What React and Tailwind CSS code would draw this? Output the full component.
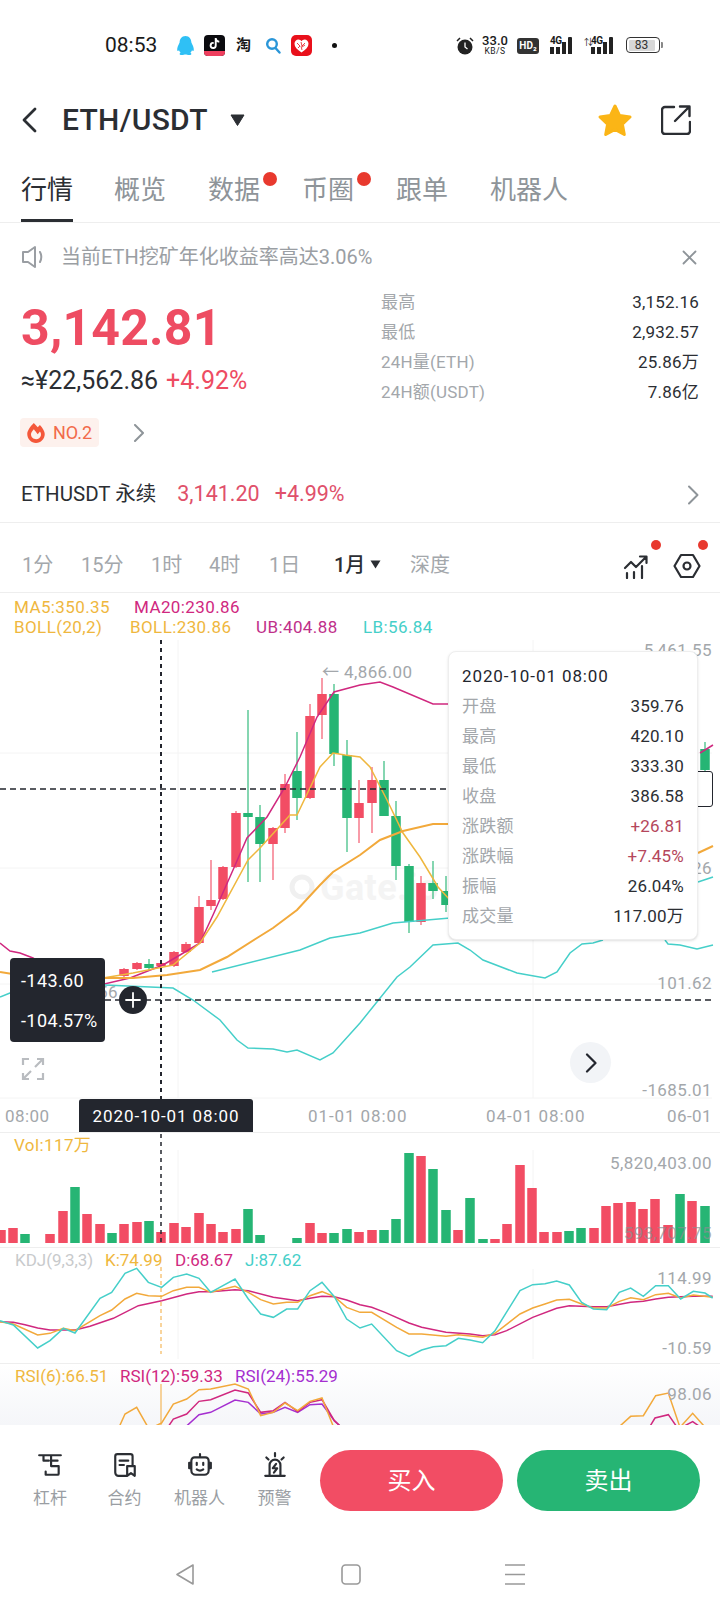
import { FaTiktok, FaFireAlt } from 'react-icons/fa';

const RED = '#f24d64';
const GREEN = '#26b574';
const YELLOW = '#efb73e';
const ORANGE = '#f2a93b';
const MAGENTA = '#d0287f';
const CYAN = '#45cfc9';
const PURPLE = '#a52fd0';

// points are read off 3x crops: x/3 + ox, y/3 + oy
const pts = (list, ox, oy) => list.map(([x, y]) => `${ox + x / 3},${oy + y / 3}`).join(' ');
const line = (list) => list.map(([x, y]) => `${x},${y}`).join(' ');

const candles = [
  [124, 968, 977, 969, 976, 'r'], [137, 962, 970, 963, 969, 'r'], [149, 959, 971, 964, 968, 'g'],
  [161, 962, 968, 963, 966, 'r'], [174, 951, 967, 952, 966, 'r'], [186, 942, 953, 944, 952, 'r'],
  [199, 896, 944, 907, 943, 'r'], [211, 860, 910, 900, 906, 'r'], [223, 866, 900, 867, 899, 'r'],
  [236, 811, 868, 813, 867, 'r'], [248, 710, 882, 813, 817, 'g'], [260, 805, 882, 817, 844, 'g'],
  [273, 827, 880, 828, 844, 'r'], [285, 774, 833, 784, 828, 'r'], [297, 732, 820, 771, 798, 'g'],
  [310, 704, 799, 716, 798, 'r'], [322, 678, 739, 694, 715, 'r'], [334, 684, 766, 694, 754, 'g'],
  [347, 740, 852, 755, 818, 'g'], [359, 780, 843, 803, 818, 'r'], [372, 767, 833, 780, 803, 'r'],
  [384, 761, 816, 780, 816, 'g'], [396, 801, 880, 816, 866, 'g'], [409, 864, 933, 866, 922, 'g'],
  [421, 876, 925, 883, 922, 'r'], [433, 861, 899, 883, 891, 'g'], [446, 876, 912, 891, 905, 'g'],
  [705, 742, 771, 749, 770, 'g'],
];

const volumes = [
  [1, 1230, 'r'], [13, 1228, 'r'], [25, 1234, 'g'], [50, 1234, 'r'], [63, 1211, 'r'], [75, 1187, 'g'],
  [87, 1214, 'r'], [100, 1224, 'r'], [112, 1233, 'g'], [124, 1224, 'r'], [137, 1222, 'r'], [149, 1221, 'g'],
  [161, 1232, 'r'], [174, 1223, 'r'], [186, 1227, 'r'], [199, 1213, 'r'], [211, 1224, 'r'], [223, 1232, 'r'],
  [236, 1229, 'r'], [248, 1209, 'g'], [260, 1235, 'g'], [297, 1238, 'g'], [310, 1223, 'r'], [322, 1233, 'r'],
  [334, 1233, 'g'], [347, 1229, 'g'], [359, 1232, 'r'], [372, 1230, 'r'], [384, 1230, 'g'], [396, 1219, 'g'],
  [409, 1153, 'g'], [421, 1156, 'r'], [433, 1169, 'g'], [446, 1210, 'g'], [458, 1230, 'r'], [470, 1198, 'g'],
  [483, 1239, 'g'], [495, 1239, 'r'], [507, 1224, 'r'], [520, 1165, 'r'], [532, 1188, 'r'], [544, 1232, 'r'],
  [557, 1232, 'r'], [569, 1231, 'g'], [581, 1228, 'g'], [594, 1228, 'r'], [606, 1206, 'r'], [618, 1203, 'r'],
  [631, 1202, 'r'], [643, 1209, 'r'], [655, 1199, 'r'], [668, 1225, 'r'], [680, 1194, 'g'], [692, 1201, 'r'],
  [705, 1206, 'g'],
];

const maUpper = [[0, 943], [10, 951], [20, 953], [33, 958], [60, 975], [100, 985], [130, 978], [163, 965], [180, 955], [200, 943], [213, 915], [233, 870], [247, 838], [267, 817], [285, 787], [300, 757], [317, 717], [334, 692], [360, 685], [380, 682], [393, 687], [433, 704], [450, 704], [470, 700]];
const maLower = [[103, 978], [133, 973], [173, 965], [200, 943], [217, 917], [248, 860], [260, 848], [290, 815], [297, 815], [320, 767], [333, 753], [345, 755], [360, 757], [370, 767], [387, 800], [403, 833], [420, 857], [438, 887], [450, 900]];
const bollMid = [[0, 972], [50, 980], [105, 978], [133, 978], [167, 975], [200, 970], [227, 957], [257, 938], [273, 928], [297, 910], [320, 885], [333, 872], [360, 855], [380, 840], [403, 831], [433, 824], [450, 824]];
const bollMidEnd = [[698, 853], [713, 846]];
const lbUpper = [[212, 972], [300, 950], [330, 938], [360, 933], [393, 923], [450, 918]];
const lbUpperEnd = [[698, 882], [713, 877]];
const lbLower = [[0, 997], [10, 993], [40, 985], [105, 985], [150, 987], [173, 988], [193, 1000], [220, 1020], [237, 1040], [248, 1048], [273, 1049], [287, 1052], [297, 1050], [320, 1060], [333, 1053], [360, 1023], [397, 977], [410, 967], [433, 945], [458, 943], [470, 950], [483, 960], [517, 973], [545, 978], [557, 972], [570, 953], [582, 944], [593, 943], [603, 940]];
const lbLowerEnd = [[665, 940], [668, 944], [680, 945], [697, 949], [713, 945]];

const kdjJ = [
  ...[[0, 245], [40, 258], [113, 327], [150, 305], [190, 268], [225, 282], [300, 178], [335, 160], [375, 103], [410, 88], [445, 130], [485, 145], [520, 115], [560, 105], [597, 118], [632, 160], [705, 120], [745, 180], [782, 225], [820, 235], [860, 210], [893, 210], [930, 155], [966, 130], [1003, 173], [1040, 240], [1080, 267]],
  ...[[35, 255], [110, 335], [147, 352], [185, 333], [220, 323], [258, 320], [295, 298], [330, 303], [368, 311], [405, 275], [480, 155], [518, 137], [555, 134], [590, 126], [628, 138], [665, 190], [700, 210], [740, 212], [778, 160], [812, 147], [850, 172], [887, 140], [925, 140], [962, 180], [1000, 157], [1035, 162], [1058, 177]].map(([x, y]) => [x + 1080, y]),
];
const kdjK = [
  ...[[0, 248], [40, 255], [113, 288], [150, 283], [190, 268], [225, 275], [300, 230], [335, 213], [375, 180], [410, 163], [445, 170], [485, 172], [520, 155], [560, 145], [597, 145], [632, 160], [705, 142], [745, 160], [782, 182], [820, 195], [860, 190], [893, 190], [930, 170], [966, 158], [1003, 173], [1040, 205], [1080, 220]],
  ...[[35, 220], [110, 265], [147, 285], [185, 285], [258, 292], [295, 287], [368, 295], [405, 283], [480, 225], [518, 207], [555, 195], [590, 183], [628, 181], [665, 195], [700, 207], [740, 207], [778, 187], [812, 176], [850, 182], [887, 167], [925, 163], [962, 177], [1000, 168], [1058, 175]].map(([x, y]) => [x + 1080, y]),
];
const kdjD = [
  ...[[0, 248], [40, 250], [75, 257], [113, 267], [150, 273], [225, 273], [270, 262], [340, 238], [415, 200], [485, 185], [560, 165], [597, 158], [632, 158], [705, 152], [745, 155], [820, 175], [893, 185], [930, 178], [966, 172], [1003, 173], [1040, 183], [1080, 197]],
  ...[[35, 205], [75, 220], [147, 252], [185, 265], [258, 280], [330, 285], [368, 290], [405, 287], [440, 275], [518, 235], [590, 208], [628, 200], [700, 203], [740, 203], [812, 190], [850, 187], [887, 180], [925, 175], [1000, 172], [1058, 172]].map(([x, y]) => [x + 1080, y]),
];

const rsi6 = [[357, 565], [375, 525], [410, 505], [447, 570], [485, 552], [520, 495], [560, 480], [597, 452], [632, 450], [705, 435], [745, 450], [782, 530], [820, 520], [855, 492], [893, 515], [930, 487], [966, 477], [1003, 570]];
const rsi12 = [[480, 600], [520, 540], [560, 525], [597, 487], [632, 482], [705, 453], [745, 462], [782, 520], [820, 515], [855, 490], [893, 518], [930, 490], [966, 482], [1003, 545], [1030, 570]];
const rsi24 = [[550, 570], [597, 527], [632, 520], [705, 483], [745, 490], [782, 525], [820, 520], [855, 505], [893, 520], [930, 497], [966, 495], [1003, 545], [1030, 570]];
const rsi6End = [[770, 570], [812, 532], [850, 530], [887, 470], [925, 462], [960, 565], [998, 523], [1040, 570]];
const rsi12End = [[865, 570], [885, 537], [925, 527], [955, 570], [998, 548], [1030, 570]];

const tabs = [
  { label: '概览', cls: 'w-[94px]' },
  { label: '数据', cls: 'w-[94px]', dot: true },
  { label: '币圈', cls: 'w-[94px]', dot: true },
  { label: '跟单', cls: 'w-[94px]' },
  { label: '机器人', cls: 'w-[80px]' },
];

const stats = [
  ['最高', '3,152.16'],
  ['最低', '2,932.57'],
  ['24H量(ETH)', '25.86万'],
  ['24H额(USDT)', '7.86亿'],
];

const details = [
  ['开盘', '359.76'],
  ['最高', '420.10'],
  ['最低', '333.30'],
  ['收盘', '386.58'],
  ['涨跌额', '+26.81', true],
  ['涨跌幅', '+7.45%', true],
  ['振幅', '26.04%'],
  ['成交量', '117.00万'],
];

const Signal = () => (
  <div className="relative flex items-end gap-[2px] h-[17px] w-[28px]">
    <span className="absolute left-0 top-[-2px] text-[10px] leading-[11px] font-bold tracking-[-0.5px]">4G</span>
    <span className="w-[4px] h-[7px] bg-[#222]" />
    <span className="w-[4px] h-[7px] bg-[#222]" />
    <span className="w-[4px] h-[12px] bg-[#222]" />
    <span className="w-[4px] h-[17px] bg-[#222] rounded-t-[1px]" />
  </div>
);

const StatusBar = () => (
  <div className="relative h-[90px] text-[#1a1a1a] shrink-0">
    <span className="absolute left-[105px] top-[32px] text-[21px] leading-[26px]">08:53</span>
    <svg className="absolute left-[176px] top-[36px]" width="19" height="20" viewBox="0 0 19 20">
      <path d="M9.500 0C5.500 0 3.800 3 3.600 6.500 2.400 9 1 11.500 1.200 14c.1 1.300 1 1.200 1.800.2.300 1 .8 1.800 1.600 2.500C3.300 17.300 3 18.800 5.500 19c1.600.1 3-.6 4-.6s2.400.7 4 .6c2.500-.2 2.200-1.700.9-2.300.8-.7 1.300-1.500 1.600-2.500.8 1 1.700 1.100 1.800-.2.2-2.500-1.200-5-2.400-7.500C15.200 3 13.500 0 9.500 0z" fill="#2fc0f5" />
    </svg>
    <div className="absolute left-[204px] top-[35px] w-[21px] h-[21px] rounded-[4px] bg-[#0b0b0f] flex items-start justify-center pt-[3px] overflow-hidden">
      <FaTiktok className="text-white text-[11px]" />
      <span className="absolute left-0 right-0 bottom-0 h-[5px] bg-[#ee3f5e]" />
    </div>
    <span className="absolute left-[236px] top-[35px] text-[15px] leading-[20px] font-bold">淘</span>
    <svg className="absolute left-[265px] top-[37px]" width="16" height="17" viewBox="0 0 16 17" fill="none" stroke="#2a96d8" strokeWidth="2.400" strokeLinecap="round">
      <circle cx="7" cy="7" r="4.800" />
      <path d="M10.500 11l4 4.500" />
    </svg>
    <div className="absolute left-[291px] top-[35px] w-[21px] h-[21px] rounded-[5px] bg-[#e9101b] flex items-center justify-center">
      <svg width="15" height="14" viewBox="0 0 15 14">
        <path d="M7.500 13.500C3 10.500.5 8 .5 4.800.5 2.300 2.400.5 4.400.5c1.300 0 2.400.7 3.100 1.800C8.200 1.200 9.300.5 10.600.5c2 0 3.900 1.800 3.900 4.300 0 3.200-2.500 5.700-7 8.700z" fill="#fff" />
        <path d="M3 4l3 3-2 2M7 3l1 4 3-3M7 7l1 4M11 6l-3 2" stroke="#e9101b" strokeWidth="0.800" fill="none" />
      </svg>
    </div>
    <span className="absolute left-[332px] top-[43px] w-[5px] h-[5px] rounded-full bg-[#111]" />

    <svg className="absolute left-[456px] top-[36px]" width="18" height="19" viewBox="0 0 18 19">
      <circle cx="9" cy="11" r="7.500" fill="#222" />
      <path d="M9 6.500V11l2.500 2" stroke="#fff" strokeWidth="1.300" fill="none" />
      <path d="M1 5l3-3M17 5l-3-3" stroke="#222" strokeWidth="1.500" />
    </svg>
    <div className="absolute left-[480px] top-[35px] w-[30px] flex flex-col items-center">
      <span className="text-[13px] leading-[12px] font-medium">33.0</span>
      <span className="text-[8.500px] leading-[9px] tracking-[0.5px]">KB/S</span>
    </div>
    <div className="absolute left-[517px] top-[38px] w-[22px] h-[16px] rounded-[3px] bg-[#333] text-white text-[10px] leading-[16px] font-bold text-center">HD₂</div>
    <div className="absolute left-[550px] top-[37px]"><Signal /></div>
    <div className="absolute left-[591px] top-[37px]"><Signal /></div>
    <span className="absolute left-[584px] top-[36px] text-[9px] leading-[12px]">⇅</span>
    <div className="absolute left-[626px] top-[37px] w-[34px] h-[16px] rounded-[4px] border border-[#333] p-[1.500px]">
      <div className="w-[26px] h-full rounded-[1px] bg-[#d8d8d8] text-[12px] leading-[11px] text-center text-[#333]">83</div>
    </div>
    <span className="absolute left-[661px] top-[42px] w-[2px] h-[6px] bg-[#888] rounded-r-[1px]" />
  </div>
);

const Header = () => (
  <div className="h-[58px] shrink-0 flex items-center pl-[21px] pr-[29px] pt-[1px]">
    <svg width="16" height="26" viewBox="0 0 16 26" fill="none" stroke="#2b2e33" strokeWidth="2.800" strokeLinecap="round" strokeLinejoin="round">
      <path d="M14 2L3 13l11 11" />
    </svg>
    <span className="ml-[25px] text-[30px] leading-[34px] font-medium text-[#2b2e33] tracking-[0.3px]">ETH/USDT</span>
    <svg className="ml-[22px]" width="15" height="12" viewBox="0 0 15 12"><path d="M1 1h13L7.500 11.500z" fill="#2b2e33" stroke="#2b2e33" strokeLinejoin="round" /></svg>
    <svg className="ml-auto" width="36" height="34" viewBox="0 0 36 34">
      <path d="M18 3l4.600 9.600 10.400 1.400-7.600 7.200 1.900 10.300L18 26.500 8.700 31.500l1.900-10.300L3 14l10.400-1.400z" fill="#fbb516" stroke="#fbb516" strokeWidth="3" strokeLinejoin="round" />
    </svg>
    <svg className="ml-[28px]" width="30" height="30" viewBox="0 0 30 30" fill="none" stroke="#2b2e33" strokeWidth="2.400" strokeLinecap="round" strokeLinejoin="round">
      <path d="M13 2H4a3 3 0 0 0-3 3v21a3 3 0 0 0 3 3h22a3 3 0 0 0 3-3v-9" />
      <path d="M14 16L28 2M19 1.500h9.500V11" />
    </svg>
  </div>
);

const Tabs = () => (
  <div className="h-[75px] shrink-0 border-b border-[#eeeeee] flex px-[21px] text-[26px] leading-[34px] text-[#8e9499]">
    <div className="relative w-[93px] pt-[25px]">
      <span className="text-[#2b2e33]">行情</span>
      <span className="absolute left-0 bottom-0 w-[52px] h-[3px] bg-[#2b2e33]" />
    </div>
    {tabs.map((t) => (
      <div key={t.label} className={`relative pt-[25px] ${t.cls}`}>
        <span className="whitespace-nowrap">{t.label}</span>
        {t.dot && <span className="absolute left-[55px] top-[24px] w-[14px] h-[14px] rounded-full bg-[#e8392e]" />}
      </div>
    ))}
  </div>
);

const Notice = () => (
  <div className="h-[68px] shrink-0 flex items-center px-[21px] text-[20px] text-[#9a9ea3]">
    <svg width="25" height="24" viewBox="0 0 25 24" fill="none" stroke="#9a9ea3" strokeWidth="2" strokeLinejoin="round" strokeLinecap="round">
      <path d="M2 7h5l7-5v20l-7-5H2z" />
      <path d="M19 7c1.500 2.800 1.500 7 0 10" />
    </svg>
    <span className="ml-[15px]">当前ETH挖矿年化收益率高达3.06%</span>
    <svg className="ml-auto mr-[2px]" width="15" height="15" viewBox="0 0 15 15" stroke="#8e9499" strokeWidth="1.800" strokeLinecap="round"><path d="M1.500 1.500l12 12M13.500 1.500l-12 12" /></svg>
  </div>
);

const Quote = () => (
  <div className="h-[176px] shrink-0 flex px-[21px]">
    <div className="w-[360px]">
      <div className="text-[50px] leading-[60px] font-bold text-[#ee4c62] mt-[7px] tracking-[0.2px]">3,142.81</div>
      <div className="flex gap-[8px] mt-[8px] text-[25px] leading-[30px]">
        <span className="text-[#2b2e33]">≈¥22,562.86</span>
        <span className="text-[#ee4c62]">+4.92%</span>
      </div>
      <div className="flex items-center mt-[22px]">
        <div className="w-[79px] h-[29px] rounded-[4px] bg-[#fdf1ed] flex items-center pl-[6px] gap-[7px] text-[#f26a4a] text-[18px] ml-[-1px]">
          <FaFireAlt className="text-[#f4573a] text-[20px]" />
          <span>NO.2</span>
        </div>
        <svg className="ml-[34px]" width="12" height="18" viewBox="0 0 12 18" fill="none" stroke="#8e9499" strokeWidth="2" strokeLinecap="round" strokeLinejoin="round"><path d="M2 1l8 8-8 8" /></svg>
      </div>
    </div>
    <div className="flex-1 -mt-[3px]">
      {stats.map(([k, v]) => (
        <div key={k} className="flex justify-between h-[30px] items-center text-[17px] tracking-[0.2px]">
          <span className="text-[#a3a7ab]">{k}</span>
          <span className="text-[#2b2e33]">{v}</span>
        </div>
      ))}
    </div>
  </div>
);

const Perp = () => (
  <div className="h-[56px] shrink-0 border-b border-[#eeeeee] flex items-center px-[21px] text-[20.500px]">
    <span className="text-[#2b2e33]">ETHUSDT 永续</span>
    <span className="ml-[21px] text-[21.500px] text-[#e0506a]">3,141.20</span>
    <span className="ml-[15px] text-[21.500px] text-[#e0506a]">+4.99%</span>
    <svg className="ml-auto" width="12" height="20" viewBox="0 0 12 20" fill="none" stroke="#8e9499" strokeWidth="2" strokeLinecap="round" strokeLinejoin="round"><path d="M2 1.500l8.500 8.500L2 18.500" /></svg>
  </div>
);

const Intervals = () => (
  <div className="relative h-[70px] shrink-0 border-b border-[#eeeeee] flex items-center pl-[22px] pt-[14px] text-[20px] text-[#a3a7ab]">
    <span className="w-[59px]">1分</span>
    <span className="w-[70px]">15分</span>
    <span className="w-[58px]">1时</span>
    <span className="w-[60px]">4时</span>
    <span className="w-[65px]">1日</span>
    <span className="text-[#2b2e33] font-medium w-[36px]">1月</span>
    <svg width="11" height="9" viewBox="0 0 11 9"><path d="M.5.5h10L5.500 8.500z" fill="#2b2e33" /></svg>
    <span className="ml-[29px]">深度</span>
    <svg className="absolute left-[623px] top-[31px]" width="26" height="25" viewBox="0 0 26 25" fill="none" stroke="#2b2e33" strokeWidth="2.200" strokeLinecap="round" strokeLinejoin="round">
      <path d="M2 14l6-6 5 5 10-10M17 2.500h6.500V9" />
      <path d="M4 19v5M11 18v6M19 12v12" />
    </svg>
    <span className="absolute left-[651px] top-[17px] w-[10px] h-[10px] rounded-full bg-[#e8392e]" />
    <svg className="absolute left-[673px] top-[30px]" width="28" height="26" viewBox="0 0 28 26" fill="none" stroke="#2b2e33" strokeWidth="2.200" strokeLinejoin="round">
      <path d="M8 2h12l6.500 11L20 24H8L1.500 13z" />
      <circle cx="14" cy="13" r="3.500" />
    </svg>
    <span className="absolute left-[698px] top-[17px] w-[10px] h-[10px] rounded-full bg-[#e8392e]" />
  </div>
);

const MainChart = () => (
  <div className="relative h-[540px] shrink-0 border-b border-[#eeeeee] text-[17px] leading-[20px] tracking-[0.4px] overflow-hidden">
    <div className="relative pt-[4px] pl-[14px]">
      <div className="flex h-[20px]">
        <span className="w-[120px] text-[#efb73e]">MA5:350.35</span>
        <span className="text-[#d0287f]">MA20:230.86</span>
      </div>
      <div className="flex h-[20px]">
        <span className="w-[116px] text-[#efb73e]">BOLL(20,2)</span>
        <span className="w-[126px] text-[#efb73e]">BOLL:230.86</span>
        <span className="w-[107px] text-[#c0308a]">UB:404.88</span>
        <span className="text-[#45cfc9]">LB:56.84</span>
      </div>
    </div>

    <svg className="absolute left-0 top-0" width="720" height="540" viewBox="0 593 720 540" fill="none">
      <g stroke="#f4f4f4" strokeWidth="1">
        <path d="M0 753H712M0 868H712M0 984H712M0 1098H712M178 640V1098M533 640V1098" />
      </g>
      <circle cx="302" cy="887" r="10" stroke="#f0f0f0" strokeWidth="5" />
      <text x="320" y="900" fontSize="36" fontWeight="700" fill="#f4f4f4" fontFamily="Roboto, sans-serif">Gate.io</text>

      {candles.map(([x, wt, wb, bt, bb, c]) => (
        <g key={x} fill={c === 'r' ? RED : GREEN}>
          <rect x={x - 0.75} y={wt} width="1.500" height={wb - wt} opacity="0.75" />
          <rect x={x - 4.750} y={bt} width="9.500" height={bb - bt} />
        </g>
      ))}

      <polyline points={line(maUpper)} stroke={MAGENTA} strokeWidth="1.500" />
      <polyline points={line(maLower)} stroke={YELLOW} strokeWidth="1.500" />
      <polyline points={line(bollMid)} stroke={ORANGE} strokeWidth="2" />
      <polyline points={line(bollMidEnd)} stroke={ORANGE} strokeWidth="2" />
      <polyline points={line(lbUpper)} stroke={CYAN} strokeWidth="1.500" />
      <polyline points={line(lbUpperEnd)} stroke={CYAN} strokeWidth="1.500" />
      <polyline points={line(lbLower)} stroke={CYAN} strokeWidth="1.500" />
      <polyline points={line(lbLowerEnd)} stroke={CYAN} strokeWidth="1.500" />
      <polyline points={line([[700, 753], [713, 745]])} stroke={MAGENTA} strokeWidth="1.500" />

      <path d="M161 640V1100" stroke="#23262e" strokeWidth="2" strokeDasharray="4 4" />
      <path d="M0 789H450" stroke="#23262e" strokeWidth="1.500" strokeDasharray="6 4" />
      <path d="M105 1000H712" stroke="#23262e" strokeWidth="1.500" strokeDasharray="6 4" />
    </svg>

    {/* price box the detail card sits on */}
    <div className="absolute left-[680px] top-[178px] w-[33px] h-[36px] bg-white border border-[#23262e] rounded-[3px]" />

    <span className="absolute right-[8px] top-[47px] text-[#a3a7ab]">5,461.55</span>
    <span className="absolute right-[8px] top-[265px] text-[#a3a7ab]">26</span>
    <span className="absolute right-[8px] top-[380px] text-[#a3a7ab]">101.62</span>
    <span className="absolute right-[8px] top-[487px] text-[#a3a7ab]">-1685.01</span>
    <span className="absolute left-[322px] top-[69px] text-[#a3a7ab]">← 4,866.00</span>
    <span className="absolute left-[98px] top-[389px] text-[#a3a7ab]">56</span>

    <div className="absolute left-[448px] top-[58px] w-[250px] h-[289px] rounded-[8px] bg-white border border-[#eeeeee] shadow-sm px-[13px] pt-[9px] leading-[30px] tracking-[0.2px]">
      <div className="h-[30px] text-[#23262e] tracking-[0.9px]">2020-10-01 08:00</div>
      {details.map(([k, v, up]) => (
        <div key={k} className="h-[30px] flex justify-between">
          <span className="text-[#a3a7ab]">{k}</span>
          <span className={up ? 'text-[#b5475c]' : 'text-[#2b2e33]'}>{v}</span>
        </div>
      ))}
    </div>

    <div className="absolute left-[10px] top-[365px] w-[95px] h-[84px] rounded-[4px] bg-[#23262e] text-white text-[18px] pl-[11px] pt-[13px] leading-[20px] flex flex-col">
      <span className="h-[40px]">-143.60</span>
      <span>-104.57%</span>
    </div>
    <div className="absolute left-[119px] top-[393px] w-[28px] h-[28px] rounded-full bg-[#23262e] flex items-center justify-center">
      <svg width="16" height="16" viewBox="0 0 16 16" stroke="#fff" strokeWidth="1.800" strokeLinecap="round"><path d="M8 1v14M1 8h14" /></svg>
    </div>
    <svg className="absolute left-[21px] top-[464px]" width="24" height="24" viewBox="0 0 24 24" fill="none" stroke="#b9bcc0" strokeWidth="2.200">
      <path d="M2 8V2h6M16 2h6v6M22 16v6h-6M8 22H2v-6" />
      <path d="M21 3l-7 7M3 21l7-7" />
    </svg>
    <div className="absolute left-[570px] top-[449px] w-[41px] h-[41px] rounded-full bg-[#f2f4f7] flex items-center justify-center">
      <svg width="12" height="20" viewBox="0 0 12 20" fill="none" stroke="#23262e" strokeWidth="2.200" strokeLinecap="round" strokeLinejoin="round"><path d="M2 1.500l8.500 8.500L2 18.500" /></svg>
    </div>

    <span className="absolute left-[5px] top-[513px] text-[#a3a7ab]">08:00</span>
    <span className="absolute left-[308px] top-[513px] text-[#a3a7ab] tracking-[0.9px]">01-01 08:00</span>
    <span className="absolute left-[486px] top-[513px] text-[#a3a7ab] tracking-[0.9px]">04-01 08:00</span>
    <span className="absolute right-[8px] top-[513px] text-[#a3a7ab]">06-01</span>
    <div className="absolute left-[79px] top-[506px] w-[174px] h-[34px] rounded-t-[3px] bg-[#23262e] text-white text-center pt-[7px] tracking-[0.9px]">2020-10-01 08:00</div>
  </div>
);

const VolumePane = () => (
  <div className="relative h-[115px] shrink-0 border-b border-[#eeeeee] text-[17px] leading-[20px] tracking-[0.4px] overflow-hidden">
    <svg className="absolute left-0 top-0" width="720" height="115" viewBox="0 1133 720 115" fill="none">
      <path d="M178 1150V1243M533 1150V1243" stroke="#f4f4f4" />
      {volumes.map(([x, top, c]) => (
        <rect key={x} x={x - 4.750} y={top} width="9.500" height={1243 - top} fill={c === 'r' ? RED : GREEN} />
      ))}
      <path d="M161 1134V1243" stroke="#23262e" strokeWidth="1.500" strokeDasharray="4 4" />
    </svg>
    <span className="absolute left-[14px] top-[2px] text-[#efb73e]">Vol:117万</span>
    <span className="absolute right-[8px] top-[20px] text-[#a3a7ab]">5,820,403.00</span>
    <span className="absolute right-[8px] top-[90px] text-[#8a8e92] opacity-70">593,707.75</span>
  </div>
);

const KdjPane = () => (
  <div className="relative h-[116px] shrink-0 border-b border-[#eeeeee] text-[17px] leading-[20px] overflow-hidden">
    <svg className="absolute left-0 top-0" width="720" height="116" viewBox="0 1249 720 116" fill="none">
      <path d="M178 1270V1360M533 1270V1360" stroke="#f4f4f4" />
      <path d="M161 1268V1355" stroke="#f2a93b" strokeWidth="1" strokeDasharray="4 3" />
      <polyline points={pts(kdjD, 0, 1240)} stroke={MAGENTA} strokeWidth="1.500" />
      <polyline points={pts(kdjK, 0, 1240)} stroke={ORANGE} strokeWidth="1.500" />
      <polyline points={pts(kdjJ, 0, 1240)} stroke={CYAN} strokeWidth="1.500" />
    </svg>
    <div className="relative flex h-[20px] mt-[2px] pl-[15px]">
      <span className="w-[90px] text-[#c8cacc]">KDJ(9,3,3)</span>
      <span className="w-[70px] text-[#efb73e]">K:74.99</span>
      <span className="w-[70px] text-[#d0287f]">D:68.67</span>
      <span className="text-[#45cfc9]">J:87.62</span>
    </div>
    <span className="absolute right-[8px] top-[20px] text-[#a3a7ab] tracking-[0.4px]">114.99</span>
    <span className="absolute right-[8px] top-[90px] text-[#a3a7ab] tracking-[0.4px]">-10.59</span>
  </div>
);

const RsiPane = () => (
  <div className="relative h-[61px] shrink-0 text-[17px] leading-[20px] overflow-hidden bg-gradient-to-b from-white to-[#f5f6f9]">
    <svg className="absolute left-0 top-0" width="720" height="61" viewBox="0 1365 720 61" fill="none">
      <path d="M161 1385V1426" stroke="#f2a93b" strokeWidth="1" />
      <polyline points={pts(rsi24, 0, 1240)} stroke={PURPLE} strokeWidth="1.500" />
      <polyline points={pts(rsi12, 0, 1240)} stroke={MAGENTA} strokeWidth="1.500" />
      <polyline points={pts(rsi6, 0, 1240)} stroke={ORANGE} strokeWidth="1.500" />
      <polyline points={pts(rsi12End, 360, 1240)} stroke={MAGENTA} strokeWidth="1.500" />
      <polyline points={pts(rsi6End, 360, 1240)} stroke={ORANGE} strokeWidth="1.500" />
    </svg>
    <div className="relative flex h-[20px] mt-[2px] pl-[15px]">
      <span className="w-[105px] text-[#efb73e]">RSI(6):66.51</span>
      <span className="w-[115px] text-[#d0287f]">RSI(12):59.33</span>
      <span className="text-[#a52fd0]">RSI(24):55.29</span>
    </div>
    <span className="absolute right-[8px] top-[20px] text-[#a3a7ab] tracking-[0.4px]">98.06</span>
  </div>
);

const tools = [
  {
    label: '杠杆',
    cls: 'w-[74px]',
    icon: <path d="M2 3h20M6 3v5h5M13 3v10h7v7a1 1 0 0 1-1 1H8v-3M13 8h6" />,
  },
  {
    label: '合约',
    cls: 'w-[75px]',
    icon: <path d="M13 22H6a3 3 0 0 1-3-3V4a2 2 0 0 1 2-2h12a2 2 0 0 1 2 2v9M7 8h8M7 12h4M14 13h7v9l-3.500-2.500L14 22z" />,
  },
  {
    label: '机器人',
    cls: 'w-[75px]',
    icon: <path d="M12 2v3M7 5h10a3 3 0 0 1 3 3v9a4 4 0 0 1-4 4H8a4 4 0 0 1-4-4V8a3 3 0 0 1 3-3zM4 10H2v5h2M20 10h2v5h-2M9 10v2M15 10v2M9 16c2 1.500 4 1.500 6 0" />,
  },
  {
    label: '预警',
    cls: 'w-[75px]',
    icon: <path d="M7 21v-9a5 5 0 0 1 10 0v9M3 22h18M12 1v3M4 5l2 2M20 5l-2 2M13 11l-3 4h4l-3 4" />,
  },
];

const ActionBar = () => (
  <div className="h-[104px] shrink-0 flex items-start pl-[13px] pt-[25px]">
    {tools.map((t) => (
      <div key={t.label} className={`flex flex-col items-center pt-[2px] ${t.cls}`}>
        <svg width="26" height="26" viewBox="0 0 24 24" fill="none" stroke="#2b2e33" strokeWidth="2" strokeLinecap="round" strokeLinejoin="round">{t.icon}</svg>
        <span className="mt-[10px] text-[17px] leading-[20px] text-[#9a9ea3] whitespace-nowrap">{t.label}</span>
      </div>
    ))}
    <div className="flex gap-[14px] ml-[8px]">
      <div className="w-[183px] h-[61px] rounded-full bg-[#f24d64] text-white text-[24px] flex items-center justify-center">买入</div>
      <div className="w-[183px] h-[61px] rounded-full bg-[#26b574] text-white text-[24px] flex items-center justify-center">卖出</div>
    </div>
  </div>
);

const NavBar = () => (
  <div className="flex-1 flex items-start pt-[35px] pl-[175px]">
    <svg width="20" height="21" viewBox="0 0 20 21" fill="none" stroke="#999" strokeWidth="1.600" strokeLinejoin="round"><path d="M18 1v19L2 10.500z" /></svg>
    <svg className="ml-[146px]" width="20" height="21" viewBox="0 0 20 21" fill="none" stroke="#999" strokeWidth="1.600"><rect x="1" y="1" width="18" height="19" rx="3.500" /></svg>
    <svg className="ml-[144px]" width="20" height="21" viewBox="0 0 20 21" stroke="#999" strokeWidth="1.600"><path d="M0 1h20M0 10.500h20M0 20h20" /></svg>
  </div>
);

export default function App() {
  return (
    <div className="w-[720px] h-[1612px] overflow-hidden bg-white flex flex-col font-['Roboto','Noto_Sans_CJK_SC',sans-serif]">
      <StatusBar />
      <Header />
      <Tabs />
      <Notice />
      <Quote />
      <Perp />
      <Intervals />
      <MainChart />
      <VolumePane />
      <KdjPane />
      <RsiPane />
      <ActionBar />
      <NavBar />
    </div>
  );
}
